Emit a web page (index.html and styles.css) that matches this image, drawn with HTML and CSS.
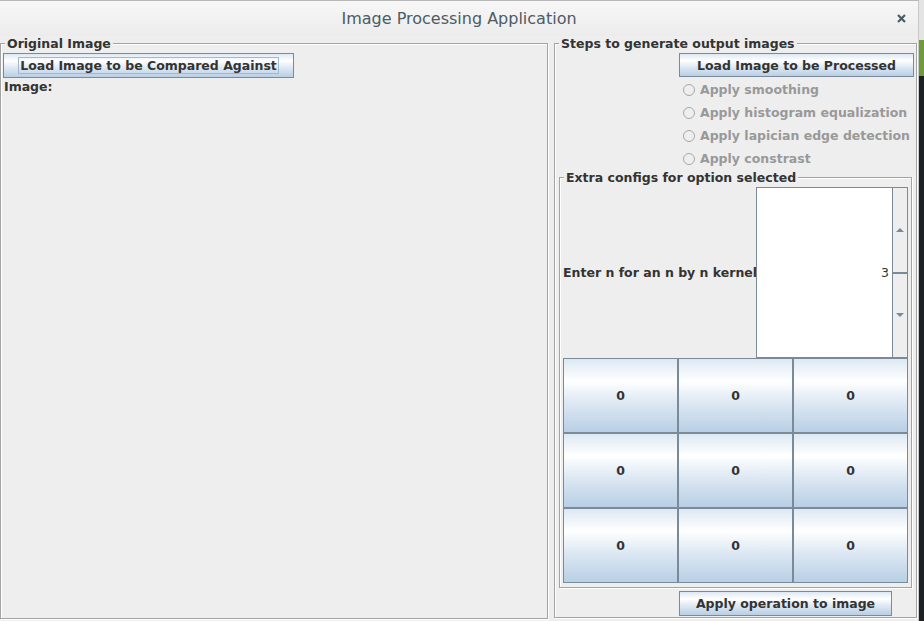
FILE: index.html
```html
<!DOCTYPE html>
<html>
<head>
<meta charset="utf-8">
<title>Image Processing Application</title>
<link rel="stylesheet" href="styles.css">
</head>
<body>
<div class="desktop">
  <div class="window">
    <div class="titlebar">
      <span class="title">Image Processing Application</span>
      <svg class="close" width="9" height="9" viewBox="0 0 9 9"><path d="M1 1L8 8M8 1L1 8" stroke="#4e5b63" stroke-width="2.2" fill="none"/></svg>
    </div>
    <div class="content">
      <div class="group group-left">
        <span class="group-title">Original Image</span>
        <button class="btn btn-compare"><span class="focus">Load Image to be Compared Against</span></button>
        <div class="label image-label">Image:</div>
      </div>
      <div class="group group-right">
        <span class="group-title">Steps to generate output images</span>
        <button class="btn btn-process">Load Image to be Processed</button>
        <div class="radios">
          <label class="radio"><span class="circle"></span>Apply smoothing</label>
          <label class="radio"><span class="circle"></span>Apply histogram equalization</label>
          <label class="radio"><span class="circle"></span>Apply lapician edge detection</label>
          <label class="radio"><span class="circle"></span>Apply constrast</label>
        </div>
        <div class="group group-inner">
          <span class="group-title">Extra configs for option selected</span>
          <div class="kernel-row">
            <span class="label">Enter n for an n by n kernel</span>
            <div class="spinner">
              <div class="spin-field">3</div>
              <div class="spin-buttons">
                <div class="spin-btn"><span class="arrow-up"></span></div>
                <div class="spin-btn"><span class="arrow-down"></span></div>
              </div>
            </div>
          </div>
          <div class="matrix">
            <button class="cell">0</button><button class="cell">0</button><button class="cell">0</button>
            <button class="cell">0</button><button class="cell">0</button><button class="cell">0</button>
            <button class="cell">0</button><button class="cell">0</button><button class="cell">0</button>
          </div>
        </div>
        <button class="btn btn-apply">Apply operation to image</button>
      </div>
    </div>
  </div>
</div>
</body>
</html>
```

FILE: styles.css
```css
html, body {
  margin: 0;
  padding: 0;
}
body {
  width: 924px;
  height: 621px;
  overflow: hidden;
  background: linear-gradient(to bottom, #e4e4e4 0, #e4e4e4 40px, #6f9b3a 40px, #6f9b3a 76px, #1c2126 76px);
  font-family: "DejaVu Sans", sans-serif;
  font-size: 12.5px;
  font-weight: bold;
  color: #333333;
}
.desktop {
  width: 924px;
  height: 621px;
}
.window {
  width: 919px;
  height: 621px;
  background: #eeeeee;
  border-top: 1px solid #b8b8b8;
  border-right: 1px solid #c8c8c8;
  box-sizing: border-box;
  display: flex;
  flex-direction: column;
}
.titlebar {
  height: 35px;
  flex: none;
  display: flex;
  align-items: center;
  justify-content: center;
  position: relative;
  background: linear-gradient(to bottom, #f7f7f7, #ececec);
}
.title {
  font-family: "DejaVu Sans", sans-serif;
  font-weight: normal;
  font-size: 16px;
  color: #4e5b63;
}
.close {
  position: absolute;
  right: 12px;
  top: 13px;
}
.content {
  flex: 1;
  display: flex;
  gap: 6px;
  padding-top: 7px;
  min-height: 0;
}
.group {
  position: relative;
  border: 1px solid #a3a3a3;
  box-shadow: inset 1px 1px 0 #ffffff, 1px 1px 0 #ffffff;
  box-sizing: border-box;
}
.group-title {
  position: absolute;
  top: -8px;
  left: 4px;
  padding: 0 2px;
  line-height: 15px;
  background: #eeeeee;
  white-space: nowrap;
}
.group-left {
  width: 548px;
  height: 576px;
  padding: 9px 0 0 2px;
}
.group-right {
  width: 363px;
  height: 575px;
  display: flex;
  flex-direction: column;
  align-items: flex-start;
  padding: 9px 0 0 0;
}
.btn {
  font-family: "DejaVu Sans", sans-serif;
  font-size: 12.5px;
  font-weight: bold;
  color: #333333;
  border: 1px solid #7a8a99;
  background: linear-gradient(to bottom, #dde8f3 0%, #ffffff 30%, #dde8f3 60%, #b8cfe5 100%);
  padding: 0;
  margin: 0;
  box-sizing: border-box;
  display: flex;
  align-items: center;
  justify-content: center;
}
.btn-compare {
  width: 291px;
  height: 25px;
}
.focus {
  border: 1px solid #a3b8cc;
  padding: 0 1px;
  line-height: 15px;
}
.image-label {
  margin-top: 1px;
  margin-left: 1px;
  line-height: 15px;
}
.btn-process {
  width: 235px;
  height: 24px;
  margin-left: 124px;
}
.radios {
  display: flex;
  flex-direction: column;
  margin-left: 128px;
  margin-top: 1px;
}
.radio {
  height: 23px;
  display: flex;
  align-items: center;
  color: #999999;
}
.circle {
  width: 10px;
  height: 10px;
  border: 1px solid #a8a8a8;
  border-radius: 50%;
  background: #eeeeee;
  margin-right: 5px;
}
.group-inner {
  width: 353px;
  height: 411px;
  margin: 7px 0 0 4px;
  padding: 9px 2px 3px 3px;
  display: flex;
  flex-direction: column;
}
.kernel-row {
  display: flex;
  align-items: center;
  height: 171px;
}
.kernel-row .label {
  width: 193px;
  white-space: nowrap;
}
.spinner {
  display: flex;
  height: 171px;
}
.spin-field {
  width: 137px;
  box-sizing: border-box;
  border: 1px solid #7a8a99;
  background: #ffffff;
  display: flex;
  align-items: center;
  justify-content: flex-end;
  padding-right: 3px;
  font-weight: normal;
  color: #333333;
}
.spin-buttons {
  width: 15px;
  display: flex;
  flex-direction: column;
  border: 1px solid #7a8a99;
  border-left: none;
  box-sizing: border-box;
}
.spin-btn {
  flex: 1;
  display: flex;
  align-items: center;
  justify-content: center;
  background: #eeeeee;
}
.spin-btn + .spin-btn {
  border-top: 2px solid #7a8a99;
}
.arrow-up {
  width: 0;
  height: 0;
  border-left: 4px solid transparent;
  border-right: 4px solid transparent;
  border-bottom: 4px solid #7a8a99;
}
.arrow-down {
  width: 0;
  height: 0;
  border-left: 4px solid transparent;
  border-right: 4px solid transparent;
  border-top: 4px solid #7a8a99;
}
.matrix {
  display: grid;
  grid-template-columns: 115px 115px 115px;
  grid-template-rows: 75px 75px 75px;
}
.cell {
  font-family: "DejaVu Sans", sans-serif;
  font-size: 12.5px;
  font-weight: bold;
  color: #333333;
  border: 1px solid #7a8a99;
  background: linear-gradient(to bottom, #dde8f3 0%, #ffffff 30%, #dde8f3 60%, #b8cfe5 100%);
  margin: 0;
  padding: 0;
}
.btn-apply {
  width: 213px;
  height: 25px;
  margin: 3px 0 0 124px;
}
```
